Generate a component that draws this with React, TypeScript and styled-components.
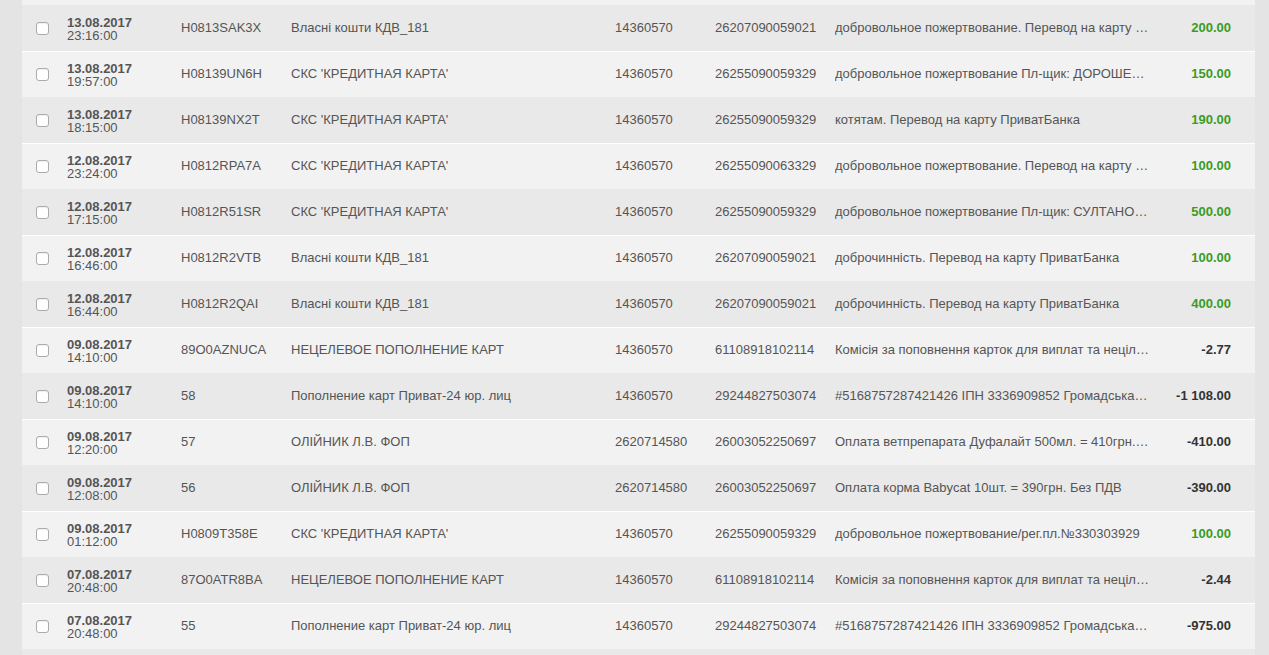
import React from 'react'
import styled, { createGlobalStyle, css } from 'styled-components'

type Payment = {
  date: string
  time: string
  ref: string
  payer: string
  code: string
  account: string
  purpose: string
  amount: string
}

const GlobalStyle = createGlobalStyle`
  html, body {
    margin: 0;
    padding: 0;
    background: #e4e4e4;
    overflow: hidden;
  }
  body {
    font-family: 'Liberation Sans', Arial, Helvetica, sans-serif;
  }
`

const payments: Payment[] = [
  { date: '13.08.2017', time: '23:16:00', ref: 'H0813SAK3X', payer: 'Власні кошти КДВ_181', code: '14360570', account: '26207090059021', purpose: 'добровольное пожертвование. Перевод на карту ПриватБанка', amount: '200.00' },
  { date: '13.08.2017', time: '19:57:00', ref: 'H08139UN6H', payer: "СКС 'КРЕДИТНАЯ КАРТА'", code: '14360570', account: '26255090059329', purpose: 'добровольное пожертвование Пл-щик: ДОРОШЕНКО ОЛЕНА', amount: '150.00' },
  { date: '13.08.2017', time: '18:15:00', ref: 'H08139NX2T', payer: "СКС 'КРЕДИТНАЯ КАРТА'", code: '14360570', account: '26255090059329', purpose: 'котятам. Перевод на карту ПриватБанка', amount: '190.00' },
  { date: '12.08.2017', time: '23:24:00', ref: 'H0812RPA7A', payer: "СКС 'КРЕДИТНАЯ КАРТА'", code: '14360570', account: '26255090063329', purpose: 'добровольное пожертвование. Перевод на карту ПриватБанка', amount: '100.00' },
  { date: '12.08.2017', time: '17:15:00', ref: 'H0812R51SR', payer: "СКС 'КРЕДИТНАЯ КАРТА'", code: '14360570', account: '26255090059329', purpose: 'добровольное пожертвование Пл-щик: СУЛТАНОВА ОКСАНА', amount: '500.00' },
  { date: '12.08.2017', time: '16:46:00', ref: 'H0812R2VTB', payer: 'Власні кошти КДВ_181', code: '14360570', account: '26207090059021', purpose: 'доброчинність. Перевод на карту ПриватБанка', amount: '100.00' },
  { date: '12.08.2017', time: '16:44:00', ref: 'H0812R2QAI', payer: 'Власні кошти КДВ_181', code: '14360570', account: '26207090059021', purpose: 'доброчинність. Перевод на карту ПриватБанка', amount: '400.00' },
  { date: '09.08.2017', time: '14:10:00', ref: '89O0AZNUCA', payer: 'НЕЦЕЛЕВОЕ ПОПОЛНЕНИЕ КАРТ', code: '14360570', account: '61108918102114', purpose: 'Комісія за поповнення карток для виплат та нецільових надходжень', amount: '-2.77' },
  { date: '09.08.2017', time: '14:10:00', ref: '58', payer: 'Пополнение карт Приват-24 юр. лиц', code: '14360570', account: '29244827503074', purpose: '#5168757287421426 ІПН 3336909852 Громадська організація', amount: '-1 108.00' },
  { date: '09.08.2017', time: '12:20:00', ref: '57', payer: 'ОЛІЙНИК Л.В. ФОП', code: '2620714580', account: '26003052250697', purpose: 'Оплата ветпрепарата Дуфалайт 500мл. = 410грн. Без ПДВ', amount: '-410.00' },
  { date: '09.08.2017', time: '12:08:00', ref: '56', payer: 'ОЛІЙНИК Л.В. ФОП', code: '2620714580', account: '26003052250697', purpose: 'Оплата корма Babycat 10шт. = 390грн. Без ПДВ', amount: '-390.00' },
  { date: '09.08.2017', time: '01:12:00', ref: 'H0809T358E', payer: "СКС 'КРЕДИТНАЯ КАРТА'", code: '14360570', account: '26255090059329', purpose: 'добровольное пожертвование/рег.пл.№330303929', amount: '100.00' },
  { date: '07.08.2017', time: '20:48:00', ref: '87O0ATR8BA', payer: 'НЕЦЕЛЕВОЕ ПОПОЛНЕНИЕ КАРТ', code: '14360570', account: '61108918102114', purpose: 'Комісія за поповнення карток для виплат та нецільових надходжень', amount: '-2.44' },
  { date: '07.08.2017', time: '20:48:00', ref: '55', payer: 'Пополнение карт Приват-24 юр. лиц', code: '14360570', account: '29244827503074', purpose: '#5168757287421426 ІПН 3336909852 Громадська організація', amount: '-975.00' },
]

const Page = styled.div`
  padding: 0 14px 0 22px;
`

// the list is scrolled: only the tail of the previous row shows on top,
// and the head of the next one at the bottom
const List = styled.div`
  display: flex;
  flex-direction: column;
  border-top: 5px solid #f2f2f2;
  border-bottom: 6px solid #e9e9e9;
`

const Row = styled.div`
  display: grid;
  grid-template-columns: 45px 114px 110px 324px 100px 120px 330px 90px;
  align-items: center;
  height: 46px;
  box-sizing: border-box;
  border-top: 1px solid #e9e9e9;
  background: #e9e9e9;
  color: #555;
  font-size: 13px;
  line-height: 16px;

  &:nth-child(even) {
    background: #f2f2f2;
    border-top-color: #ffffff;
  }
`

const CheckCell = styled.div`
  display: flex;
  align-items: center;
  padding-left: 14px;
`

const Check = styled.input`
  appearance: none;
  width: 13px;
  height: 13px;
  margin: 0;
  box-sizing: border-box;
  border: 1px solid #ababab;
  border-radius: 3px;
  background: #fff;
  box-shadow: inset 0 1px 1px rgba(0, 0, 0, 0.06);
`

const DateCell = styled.div`
  display: flex;
  flex-direction: column;
  line-height: 13px;
`

const DateText = styled.span`
  font-weight: bold;
`

const Cell = styled.div`
  white-space: nowrap;
  overflow: hidden;
  padding-bottom: 2px;
`

const Purpose = styled(Cell)`
  text-overflow: ellipsis;
  padding-right: 15px;
`

const Amount = styled.div<{ $positive: boolean }>`
  text-align: right;
  padding: 0 24px 2px 0;
  font-weight: bold;
  white-space: nowrap;
  ${p =>
    p.$positive
      ? css`
          color: #3a9c1f;
        `
      : css`
          color: #333;
        `}
`

const PaymentRow = ({ item }: { item: Payment }) => (
  <Row>
    <CheckCell>
      <Check type="checkbox" />
    </CheckCell>
    <DateCell>
      <DateText>{item.date}</DateText>
      <span>{item.time}</span>
    </DateCell>
    <Cell>{item.ref}</Cell>
    <Cell>{item.payer}</Cell>
    <Cell>{item.code}</Cell>
    <Cell>{item.account}</Cell>
    <Purpose>{item.purpose}</Purpose>
    <Amount $positive={!item.amount.startsWith('-')}>{item.amount}</Amount>
  </Row>
)

export default function App() {
  return (
    <>
      <GlobalStyle />
      <Page>
        <List>
          {payments.map((p, i) => (
            <PaymentRow key={i} item={p} />
          ))}
        </List>
      </Page>
    </>
  )
}
